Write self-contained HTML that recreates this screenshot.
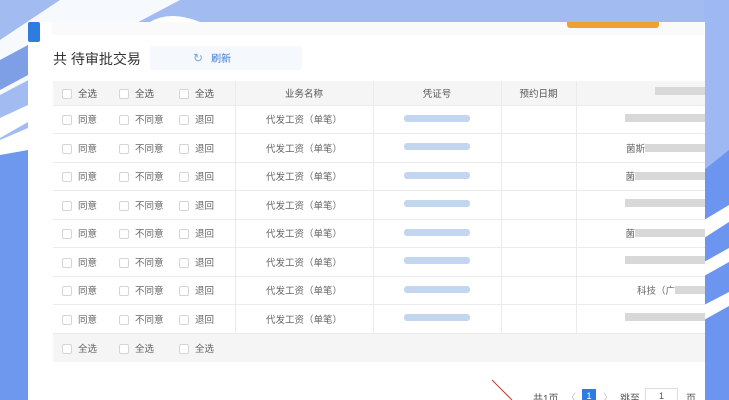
<!DOCTYPE html>
<html><head><meta charset="utf-8"><style>
*{margin:0;padding:0;box-sizing:border-box}
html,body{overflow:hidden}
body{width:729px;height:400px;position:relative;background:#a2bcf2;font-family:"Liberation Sans","Noto Sans CJK SC",sans-serif;font-size:10px;color:#555}
.a{position:absolute}
.card{left:28px;top:22px;width:677px;height:378px;background:#fff}
table{position:absolute;left:53px;top:81px;width:652px;border-collapse:collapse;table-layout:fixed}
td{height:28.5px;border-bottom:1px solid #ebebeb;font-size:9.5px;color:#666;white-space:nowrap;overflow:hidden}
tr.h td{background:#f5f5f5;height:24px;color:#555}
tr.f td{background:#f5f5f5;height:29px;border:none}
.cb{display:inline-block;width:10px;height:10px;border:1px solid #d5d5d5;border-radius:2px;background:#fff;vertical-align:-2px;margin:0 6px 0 9px}
.c{text-align:center}
.bl{border-left:1px solid #ebebeb}
.v{display:inline-block;width:66px;height:7px;background:#c3d6ef;border-radius:3px}
.g{display:inline-block;height:8px;background:#d8d8d8}
</style></head><body>
<svg class="a" style="left:0;top:0" width="729" height="400">
<polygon points="0,40 60,0 180,0 0,95" fill="#ffffff" opacity=".9"/>
<polygon points="0,60 28,45 28,75 0,90" fill="#7e9ee6"/>
<polygon points="0,118 28,105 28,122 0,138" fill="#ffffff"/>
<rect x="0" y="140" width="28" height="260" fill="#6d98ee"/>
<polygon points="0,140 28,128 28,150 0,155" fill="#ffffff"/>
<rect x="704" y="0" width="25" height="400" fill="#6b95ee"/>
<polygon points="704,0 729,0 729,150 704,170" fill="#9db8f3"/>
<polygon points="704,220 729,205 729,222 704,238" fill="#ffffff"/>
<polygon points="704,262 729,248 729,262 704,276" fill="#ffffff"/>
<polygon points="704,305 729,292 729,306 704,320" fill="#ffffff"/>
<path d="M150 22 Q170 10 200 22 Z" fill="#fff"/>
</svg>
<div class="a card"></div>
<div class="a" style="left:52px;top:22px;width:652px;height:13px;background:#fafafa"></div>
<div class="a" style="left:28px;top:22px;width:12px;height:20px;background:#2f7ce0;border-radius:2px"></div>
<div class="a" style="left:567px;top:22px;width:92px;height:6px;background:#f0a030;border-radius:0 0 3px 3px"></div>
<div class="a" style="left:53px;top:49px;font-size:14px;color:#333">共 待审批交易</div>
<div class="a" style="left:150px;top:46px;width:152px;height:24px;background:#f5f8fd;border-radius:3px;font-size:10px;color:#3a7bd5;line-height:24px;padding-left:43px">
<span style="font-size:12px;color:#7aa6dc;margin-right:8px">↻</span>刷新</div>
<table>
<colgroup><col style="width:57px"><col style="width:60px"><col style="width:65px"><col style="width:138px"><col style="width:128px"><col style="width:75px"><col style="width:129px"></colgroup>
<tr class="h"><td><span class="cb"></span>全选</td><td><span class="cb"></span>全选</td><td><span class="cb"></span>全选</td><td class="c bl">业务名称</td><td class="c bl">凭证号</td><td class="c bl">预约日期</td><td class="c bl" style="text-align:right"><span class="g" style="width:50px"></span></td></tr>
<tr><td><span class="cb"></span>同意</td><td><span class="cb"></span>不同意</td><td><span class="cb"></span>退回</td><td class="c bl">代发工资（单笔）</td><td class="c bl"><span class="v"></span></td><td class="bl"></td><td class="bl" style="text-align:right"><span class="g" style="width:80px"></span></td></tr>
<tr><td><span class="cb"></span>同意</td><td><span class="cb"></span>不同意</td><td><span class="cb"></span>退回</td><td class="c bl">代发工资（单笔）</td><td class="c bl"><span class="v"></span></td><td class="bl"></td><td class="bl" style="text-align:right">菌斯<span class="g" style="width:60px"></span></td></tr>
<tr><td><span class="cb"></span>同意</td><td><span class="cb"></span>不同意</td><td><span class="cb"></span>退回</td><td class="c bl">代发工资（单笔）</td><td class="c bl"><span class="v"></span></td><td class="bl"></td><td class="bl" style="text-align:right">菌<span class="g" style="width:70px"></span></td></tr>
<tr><td><span class="cb"></span>同意</td><td><span class="cb"></span>不同意</td><td><span class="cb"></span>退回</td><td class="c bl">代发工资（单笔）</td><td class="c bl"><span class="v"></span></td><td class="bl"></td><td class="bl" style="text-align:right"><span class="g" style="width:80px"></span></td></tr>
<tr><td><span class="cb"></span>同意</td><td><span class="cb"></span>不同意</td><td><span class="cb"></span>退回</td><td class="c bl">代发工资（单笔）</td><td class="c bl"><span class="v"></span></td><td class="bl"></td><td class="bl" style="text-align:right">菌<span class="g" style="width:70px"></span></td></tr>
<tr><td><span class="cb"></span>同意</td><td><span class="cb"></span>不同意</td><td><span class="cb"></span>退回</td><td class="c bl">代发工资（单笔）</td><td class="c bl"><span class="v"></span></td><td class="bl"></td><td class="bl" style="text-align:right"><span class="g" style="width:80px"></span></td></tr>
<tr><td><span class="cb"></span>同意</td><td><span class="cb"></span>不同意</td><td><span class="cb"></span>退回</td><td class="c bl">代发工资（单笔）</td><td class="c bl"><span class="v"></span></td><td class="bl"></td><td class="bl" style="text-align:right">科技（广<span class="g" style="width:30px"></span></td></tr>
<tr><td><span class="cb"></span>同意</td><td><span class="cb"></span>不同意</td><td><span class="cb"></span>退回</td><td class="c bl">代发工资（单笔）</td><td class="c bl"><span class="v"></span></td><td class="bl"></td><td class="bl" style="text-align:right"><span class="g" style="width:80px"></span></td></tr>
<tr class="f"><td><span class="cb"></span>全选</td><td><span class="cb"></span>全选</td><td><span class="cb"></span>全选</td><td></td><td></td><td></td><td></td></tr>
</table>
<svg class="a" style="left:490px;top:378px" width="30" height="22"><line x1="2" y1="2" x2="22" y2="22" stroke="#c0392b" stroke-width="1"/></svg>
<div class="a" style="left:533px;top:390px;font-size:10px;color:#555">共1页</div>
<div class="a" style="left:566px;top:389px;color:#bbb">〈</div>
<div class="a" style="left:582px;top:389px;width:14px;height:14px;background:#2f7ce0;color:#fff;text-align:center;font-size:9px;line-height:14px">1</div>
<div class="a" style="left:603px;top:389px;color:#bbb">〉</div>
<div class="a" style="left:620px;top:390px;color:#555">跳至</div>
<div class="a" style="left:645px;top:388px;width:33px;height:16px;border:1px solid #ddd;text-align:center;font-size:9px;line-height:14px">1</div>
<div class="a" style="left:686px;top:390px;color:#555">页</div>
</body></html>
